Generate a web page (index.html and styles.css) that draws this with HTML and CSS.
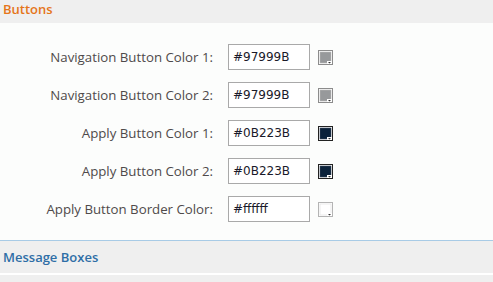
FILE: index.html
```html
<!DOCTYPE html>
<html>

<head>
    <meta charset="utf-8">
    <meta name="viewport" content="width=device-width, initial-scale=1">
    <title>Buttons</title>
    <link rel="stylesheet" href="styles.css">
</head>

<body>
    <div class="head orange">Buttons</div>
    <div class="panel">
        <div class="row">
            <label class="lbl">Navigation Button Color 1:</label>
            <input class="eingabe" type="text" value="#97999B">
            <svg class="swatch" width="15" height="15" viewBox="0 0 15 15">
                <rect x="0.5" y="0.5" width="14" height="14" fill="#ffffff" stroke="#8c8c8c"/>
                <rect x="2" y="2" width="11" height="11" fill="#97999B" stroke="#b9b9b9" stroke-width="0.6"/>
                <rect x="9" y="11" width="5" height="3" fill="#ffffff"/>
                <path d="M10 12h3l-1.5 1.5z" fill="#333"/>
            </svg>
        </div>
        <div class="row">
            <label class="lbl">Navigation Button Color 2:</label>
            <input class="eingabe" type="text" value="#97999B">
            <svg class="swatch" width="15" height="15" viewBox="0 0 15 15">
                <rect x="0.5" y="0.5" width="14" height="14" fill="#ffffff" stroke="#8c8c8c"/>
                <rect x="2" y="2" width="11" height="11" fill="#97999B" stroke="#b9b9b9" stroke-width="0.6"/>
                <rect x="9" y="11" width="5" height="3" fill="#ffffff"/>
                <path d="M10 12h3l-1.5 1.5z" fill="#333"/>
            </svg>
        </div>
        <div class="row">
            <label class="lbl">Apply Button Color 1:</label>
            <input class="eingabe" type="text" value="#0B223B">
            <svg class="swatch" width="15" height="15" viewBox="0 0 15 15">
                <rect x="0.5" y="0.5" width="14" height="14" fill="#ffffff" stroke="#222"/>
                <rect x="2" y="2" width="11" height="11" fill="#0B223B" stroke="#3c4a5c" stroke-width="0.6"/>
                <rect x="9" y="11" width="5" height="3" fill="#ffffff"/>
                <path d="M10 12h3l-1.5 1.5z" fill="#333"/>
            </svg>
        </div>
        <div class="row">
            <label class="lbl">Apply Button Color 2:</label>
            <input class="eingabe" type="text" value="#0B223B">
            <svg class="swatch" width="15" height="15" viewBox="0 0 15 15">
                <rect x="0.5" y="0.5" width="14" height="14" fill="#ffffff" stroke="#222"/>
                <rect x="2" y="2" width="11" height="11" fill="#0B223B" stroke="#3c4a5c" stroke-width="0.6"/>
                <rect x="9" y="11" width="5" height="3" fill="#ffffff"/>
                <path d="M10 12h3l-1.5 1.5z" fill="#333"/>
            </svg>
        </div>
        <div class="row">
            <label class="lbl">Apply Button Border Color:</label>
            <input class="eingabe" type="text" value="#ffffff">
            <svg class="swatch" width="15" height="15" viewBox="0 0 15 15">
                <rect x="0.5" y="0.5" width="14" height="14" fill="#ffffff" stroke="#b4b4b4"/>
                <rect x="2" y="2" width="11" height="11" fill="#ffffff" stroke="#dddddd" stroke-width="0.6"/>
                <rect x="9" y="11" width="5" height="3" fill="#ffffff"/>
                <path d="M10 12h3l-1.5 1.5z" fill="#333"/>
            </svg>
        </div>
    </div>
    <div class="head blue big">Message Boxes</div>
    <div class="head rest"></div>
</body>

</html>
```

FILE: styles.css
```css
body {
    margin: 0;
    font-family: "Open Sans", Arial, sans-serif;
    background-color: #ffffff;
}

.head {
    background-color: #efefef;
    font-size: 13px;
    font-weight: 600;
    padding-left: 3px;
    height: 23px;
    line-height: 19px;
}

.orange {
    color: #e5751a;
}

.blue {
    color: #2e6ea6;
}

.big {
    height: 32px;
    line-height: 32px;
    margin-bottom: 2px;
}

.rest {
    height: 10px;
}

.panel {
    background-color: #fcfdfc;
    padding-top: 21px;
    padding-bottom: 18px;
    border-bottom: 1px solid #a8cbe6;
    display: flex;
    flex-direction: column;
    gap: 12px;
}

.row {
    display: flex;
    align-items: center;
    height: 26px;
}

.lbl {
    width: 213px;
    text-align: right;
    font-size: 13.25px;
    color: #4f4a4a;
}

.eingabe {
    box-sizing: border-box;
    margin: 0 0 0 15px;
    width: 82px;
    height: 26px;
    border: 1px solid #a9a9a9;
    padding: 0 4px;
    font-family: "DejaVu Sans", Verdana, sans-serif;
    font-size: 12px;
    color: #1a1a2a;
    background-color: #ffffff;
}

.swatch {
    margin-left: 8px;
    display: block;
}
```
